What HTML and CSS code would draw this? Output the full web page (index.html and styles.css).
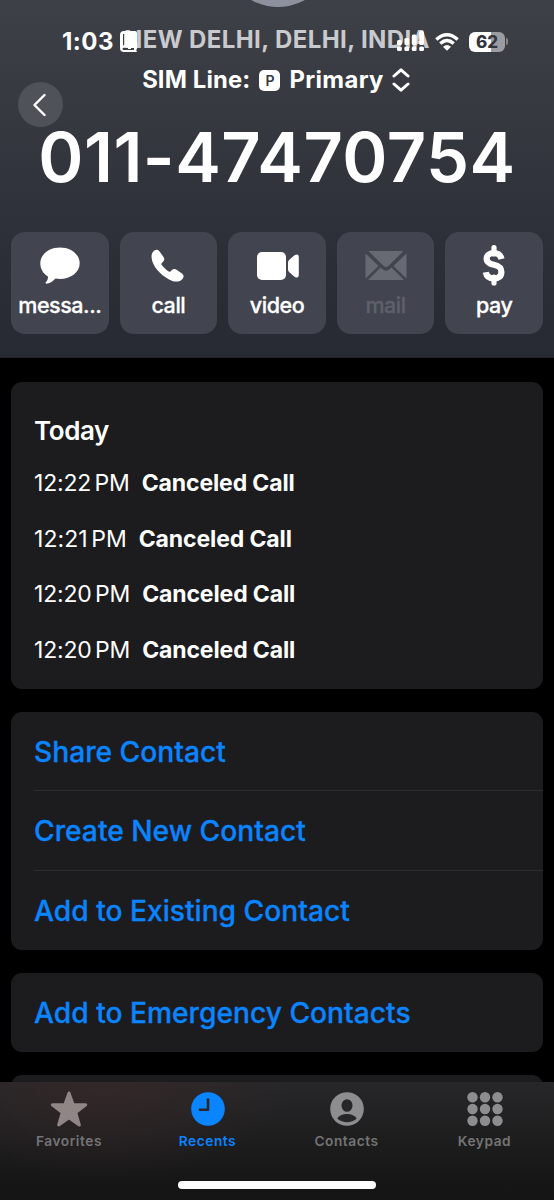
FILE: index.html
```html
<!DOCTYPE html>
<html lang="en">
<head>
<meta charset="utf-8">
<title>Contact</title>
<link rel="stylesheet" href="styles.css">
</head>
<body>
<div class="phone">
  <header class="hero">
    <div class="avatar"></div>
    <div class="statusbar">
      <span class="clock">1:03</span>
      <svg class="book" width="18" height="22" viewBox="0 0 18 22"><path fill="#fff" fill-rule="evenodd" d="M4 0H15Q17 0 17 2V17.500Q15.500 19 17 21H4Q0 21 0 17V4Q0 0 4 0ZM3 3V14.500L4.200 14V3ZM4 16.800Q2.500 16.800 2.500 17.900Q2.500 19 4 19H14V17H11V18H8V16.800Z"/></svg>
      <span class="grow"></span>
      <svg class="signal" width="28" height="21" viewBox="0 0 28 21" fill="#fff"><rect x="0" y="9" width="4.800" height="5" rx="1.500"/><rect x="7.400" y="7" width="4.800" height="7" rx="1.500"/><rect x="14.800" y="3.500" width="4.800" height="10.500" rx="1.500"/><rect x="22.200" y="0" width="4.800" height="14" rx="1.500"/><rect x="0" y="15.500" width="4.800" height="4.500" rx="1.500"/><rect x="7.400" y="15.500" width="4.800" height="4.500" rx="1.500"/><rect x="14.800" y="15.500" width="4.800" height="4.500" rx="1.500"/><rect x="22.200" y="15.500" width="4.800" height="4.500" rx="1.500"/></svg>
      <svg class="wifi" width="24" height="18" viewBox="0 0 24 18"><g fill="none" stroke="#fff" stroke-width="3.300"><path d="M1.300 6.500Q12 -3 22.700 6.500"/><path d="M5.300 10.500Q12 4.500 18.700 10.500"/></g><path fill="#fff" d="M8 13.700Q12 10.200 16 13.700L12 17.700Z"/></svg>
      <span class="battery">62</span><span class="nub"></span>
    </div>
    <div class="city">NEW DELHI, DELHI, INDIA</div>
    <div class="sim"><span>SIM Line:</span><b class="badge">P</b><span>Primary</span><svg width="18" height="24" viewBox="0 0 18 24" fill="none" stroke="#fff" stroke-width="3" stroke-linecap="round" stroke-linejoin="round"><path d="M2 8L9 1.800L16 8M2 16L9 22.200L16 16"/></svg></div>
    <div class="back"><svg width="14" height="24" viewBox="0 0 14 24" fill="none" stroke="#fff" stroke-width="2.400" stroke-linecap="round" stroke-linejoin="round"><path d="M12.500 2L2.500 12L12.500 22"/></svg></div>
    <h1 class="number">011-47470754</h1>
    <div class="actions">
      <div class="action"><svg width="42" height="42" viewBox="0 0 42 42" fill="#fff"><path d="M21 3.500C32 3.500 40.700 10.500 40.700 19.200S32 35 21 35C19.500 35 18 34.900 16.500 34.600C14 37.500 10 39.800 7.500 39.800C6.500 39.800 6.300 38.800 7 38.100C8.500 36.500 9.200 34.500 8.800 32.200C4 29.500 1.300 24.800 1.300 19.200C1.300 10.500 10 3.500 21 3.500Z"/></svg><span>messa...</span></div>
      <div class="action"><svg width="42" height="42" viewBox="0 0 42 42" fill="#fff"><path d="M5.500 8.500C7.500 5.500 10.500 4.800 12.600 7.500L16.500 13C17.800 15 17.400 16.500 15.800 18L14.800 19C14.200 19.700 14.300 20.300 14.800 21C16.500 23.300 19.300 26 21.800 27.500C22.500 28 23 27.900 23.600 27.300L24.700 26.200C26.200 24.800 27.700 24.500 29.500 25.700L35 29.600C37.500 31.500 36.800 34.200 34.200 36.200C31.400 38.300 27 38 22.500 35.700C12.500 30.500 5.500 21.500 4.700 14.500C4.400 12 4.500 10.200 5.500 8.500Z"/></svg><span>call</span></div>
      <div class="action"><svg width="44" height="42" viewBox="0 0 44 42" fill="#fff"><rect x="2" y="8" width="29" height="28" rx="5"/><path d="M33 18.500Q33 16.800 34.300 15.700L39.500 11.300Q43.800 8.800 43.800 13.500V30.500Q43.800 35.200 39.500 32.700L34.300 28.300Q33 27.200 33 25.500Z"/></svg><span>video</span></div>
      <div class="action off"><svg width="42" height="42" viewBox="0 0 42 42" fill="#686a73"><path d="M3.500 7H38.500L23.300 22Q21 24 18.700 22Z"/><path d="M.5 9.500L13.500 22L.5 34.500ZM41.500 9.500L28.500 22L41.500 34.500ZM15.500 23.500L17.500 25.300Q21 28 24.500 25.300L26.500 23.500L39 36H3Z"/></svg><span>mail</span></div>
      <div class="action"><svg width="42" height="42" viewBox="0 0 42 42" fill="none" stroke="#fff"><path stroke-width="6.200" d="M28.500 15C27.500 10.700 24.800 9 21 9C16.600 9 13.600 11.300 13.600 14.800C13.600 18 15.500 19.600 20.800 20.800C26.200 22.100 28.400 23.800 28.400 28C28.400 32.500 25.500 34.500 21 34.500C16.200 34.500 13.500 32.400 12.800 28.300"/><path stroke-width="5.200" stroke-linecap="round" d="M21 3.500V10M21 33V39"/></svg><span>pay</span></div>
    </div>
  </header>
  <main class="content">
    <section class="card log">
      <h2>Today</h2>
      <div class="row"><span class="time">12:22<i></i>PM</span><b>Canceled Call</b></div>
      <div class="row"><span class="time wide">12:21<i></i>PM</span><b>Canceled Call</b></div>
      <div class="row"><span class="time">12:20<i></i>PM</span><b>Canceled Call</b></div>
      <div class="row"><span class="time">12:20<i></i>PM</span><b>Canceled Call</b></div>
    </section>
    <section class="card links">
      <div class="link">Share Contact</div>
      <div class="link">Create New Contact</div>
      <div class="link">Add to Existing Contact</div>
    </section>
    <section class="card links"><div class="link">Add to Emergency Contacts</div></section>
    <section class="card peek"></section>
  </main>
  <nav class="tabs">
    <div class="tab"><svg width="38" height="36" viewBox="0 0 38 36" fill="#908686" stroke="#908686" stroke-width="3" stroke-linejoin="round"><path d="M19 2L23.100 13.500L35.700 13.800L25.700 21.500L29.300 34L19 26.700L8.700 34L12.300 21.500L2.300 13.800L14.900 13.500Z"/></svg><span>Favorites</span></div>
    <div class="tab active"><svg width="36" height="36" viewBox="0 0 36 36"><circle cx="18" cy="18" r="16.800" fill="#0a84ff"/><path d="M18 8.500V18.800H10" fill="none" stroke="#2b2526" stroke-width="2.600" stroke-linecap="round" stroke-linejoin="round"/></svg><span>Recents</span></div>
    <div class="tab"><svg width="36" height="36" viewBox="0 0 36 36"><circle cx="18" cy="18" r="16.800" fill="#8d8d8f"/><ellipse cx="18" cy="14.500" rx="5.500" ry="6.300" fill="#262628"/><path d="M8.300 27.500C10 24.500 13.500 23 18 23S26 24.500 27.700 27.500C25 30 21.500 31.200 18 31.200S11 30 8.300 27.500Z" fill="#262628"/></svg><span>Contacts</span></div>
    <div class="tab"><svg width="36" height="36" viewBox="0 0 36 36" fill="#8d8d8f"><circle cx="5.500" cy="6.200" r="5.200"/><circle cx="18" cy="6.200" r="5.200"/><circle cx="30.500" cy="6.200" r="5.200"/><circle cx="5.500" cy="18" r="5.200"/><circle cx="18" cy="18" r="5.200"/><circle cx="30.500" cy="18" r="5.200"/><circle cx="5.500" cy="29.800" r="5.200"/><circle cx="18" cy="29.800" r="5.200"/><circle cx="30.500" cy="29.800" r="5.200"/></svg><span>Keypad</span></div>
    <div class="home"></div>
  </nav>
</div>
</body>
</html>
```
FILE: styles.css
```css
* { box-sizing: border-box; }
body { margin: 0; background: #000; }
.phone { position: relative; width: 554px; height: 1200px; overflow: hidden; font-family: Inter, "Liberation Sans", sans-serif; color: #fff; display: flex; flex-direction: column; }
svg { display: block; flex: none; }
.hero { position: relative; height: 358px; flex: none; background: linear-gradient(#3e4048, #363840 35%, #2d2f38 70%, #272933); border-bottom: 1px solid #222329; overflow: hidden; padding-top: 28px; }
.avatar { position: absolute; left: 223px; top: -103px; width: 110px; height: 110px; border-radius: 50%; background: #8d909d; }
.statusbar { position: absolute; z-index: 2; left: 62px; top: 28px; width: 446px; height: 27px; display: flex; align-items: center; }
.clock { font-size: 24px; font-weight: 700; line-height: 27px; letter-spacing: .5px; }
.book { margin-left: 6px; }
.grow { flex: 1; }
.signal { margin-right: 10px; }
.wifi { margin-right: 10px; }
.battery { width: 36px; height: 20px; border-radius: 6px; background: linear-gradient(90deg, #fff 62%, #9b9ca1 62%); color: #33353e; font-size: 17px; font-weight: 800; line-height: 20px; text-align: center; }
.nub { width: 2px; height: 7px; margin-left: 1px; border-radius: 0 3px 3px 0; background: #85868c; }
.city { height: 24px; line-height: 24px; font-size: 24px; font-weight: 700; letter-spacing: .4px; color: #c9cace; text-align: center; white-space: nowrap; }
.sim { margin-top: 16px; height: 24px; display: flex; justify-content: center; align-items: center; font-size: 23.800px; line-height: 24px; font-weight: 700; letter-spacing: .15px; white-space: nowrap; padding-right: 2px; }
.sim span:nth-of-type(2) { letter-spacing: .4px; }
.badge { width: 21px; height: 21px; margin: 0 9px; border-radius: 5px; background: #fff; color: #363840; font-size: 14px; font-weight: 600; letter-spacing: 0; line-height: 21px; text-align: center; }
.sim svg { margin-left: 8px; }
.back { position: absolute; left: 18px; top: 82px; width: 45px; height: 45px; border-radius: 50%; background: #50525a; display: flex; align-items: center; padding-left: 14px; }
.number { margin: 24px 0 0; height: 84px; line-height: 84px; font-size: 68.500px; font-weight: 600; letter-spacing: .5px; text-align: center; white-space: nowrap; }
.actions { margin: 32px 11px 0; display: grid; grid-template-columns: repeat(5, 1fr); gap: 11px; }
.action { height: 102px; border-radius: 14px; background: #42444f; display: flex; flex-direction: column; align-items: center; padding-top: 12px; font-size: 21.500px; line-height: 28px; font-weight: 500; letter-spacing: -.45px; -webkit-text-stroke: .3px currentColor; }
.action span { margin-top: 5px; }
.off { color: #5e606b; }
.content { padding: 24px 11px 0; display: flex; flex-direction: column; gap: 23px; }
.card { background: #1c1c1e; border-radius: 11px; }
.log { height: 307px; padding: 33px 23px 0; }
.log h2 { margin: 0 0 11px; font-size: 26px; line-height: 32px; font-weight: 600; letter-spacing: -.4px; }
.row { height: 55.500px; display: flex; align-items: flex-start; font-size: 23px; line-height: 50px; white-space: nowrap; }
.row b { margin-left: 12px; letter-spacing: -.12px; }
.time { letter-spacing: -.2px; }
.time i { display: inline-block; width: 3.500px; }
.wide { letter-spacing: .05px; }
.link { height: 79.250px; margin-left: 23px; line-height: 80px; font-size: 28.200px; font-weight: 500; -webkit-text-stroke: .3px currentColor; color: #0a84ff; white-space: nowrap; }
.link:not(:last-child) { border-bottom: 1px solid #2d2d2f; }
.peek { height: 60px; }
.tabs { position: absolute; z-index: 3; left: 0; top: 1082px; width: 554px; height: 118px; padding: 9px 0 0; display: grid; grid-template-columns: 138px 139px 139px 137px; background: radial-gradient(ellipse 190px 100px at 105px 0, #392829b0, #39282900), linear-gradient(#272729, #151515 90%); }
.tab { display: flex; flex-direction: column; align-items: center; font-size: 13.700px; font-weight: 600; color: #747476; line-height: 18px; letter-spacing: .55px; }
.tab span { margin-top: 5px; }
.active { color: #0a84ff; }
.home { position: absolute; left: 178px; bottom: 11px; width: 198px; height: 8px; border-radius: 4px; background: #fff; }
```
